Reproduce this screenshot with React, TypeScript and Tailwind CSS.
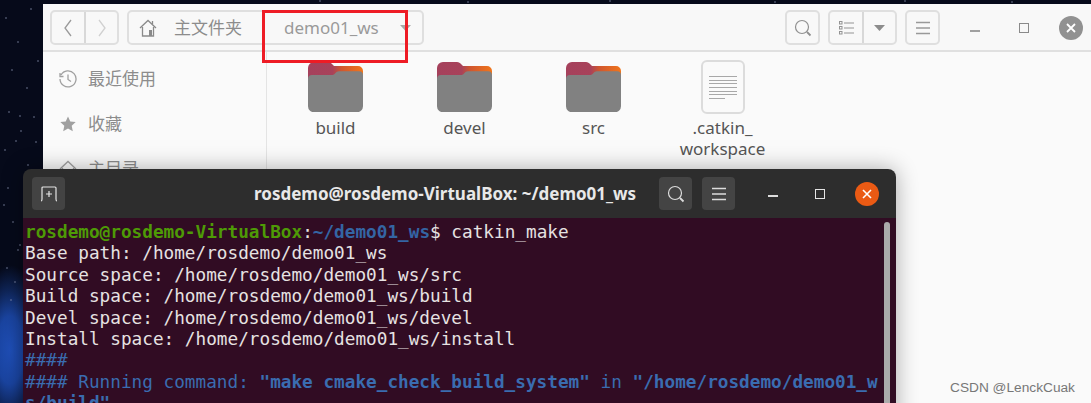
const sans = 'font-["Noto_Sans","Noto_Sans_CJK_SC",sans-serif]'

const stars = [
  [6, 18], [18, 42], [31, 9], [12, 70], [27, 88], [38, 61], [9, 112], [21, 131], [34, 117], [20, 116], [5, 150],
  [16, 141], [28, 165], [8, 188], [36, 142], [13, 222], [4, 205], [18, 250], [7, 268], [15, 282], [11, 300], [20, 245],
  [320, 1], [468, 2], [610, 1], [775, 2], [905, 1], [1012, 2],
]

function Wallpaper() {
  return (
    <svg className="absolute left-0 top-0" width="1091" height="403" viewBox="0 0 1091 403">
      {stars.map(([x, y]) => (
        <circle key={`${x}-${y}`} cx={x} cy={y} r="0.700" fill="#8d97b5" />
      ))}
    </svg>
  )
}

function Folder() {
  return (
    <svg width="55" height="50" viewBox="0 0 55 50">
      <defs>
        <linearGradient id="tab" x1="0" x2="1" y1="0" y2="0">
          <stop offset="0" stopColor="#a5415c" />
          <stop offset="0.45" stopColor="#a8425a" />
          <stop offset="0.6" stopColor="#d0562f" />
          <stop offset="1" stopColor="#f0761c" />
        </linearGradient>
      </defs>
      <path d="M0 6a6 6 0 0 1 6-6h14c2 0 3 1 4 2l2 2h24a5 5 0 0 1 5 5v12H0z" fill="url(#tab)" />
      <path d="M0 17a4 4 0 0 1 4-4h19c2 0 3-.5 4-1.500l1.500-1.500c.8-.6 1.500-.8 2.500-.8h20a4 4 0 0 1 4 4v31a6 6 0 0 1-6 6H6a6 6 0 0 1-6-6z" fill="#818181" />
    </svg>
  )
}

function DocIcon() {
  return (
    <div className="-mb-[2px] flex h-[54px] w-[44px] flex-col gap-[2.700px] rounded-[6px] border-2 border-[#dcdcdc] bg-[#fafafa] px-[6px] pt-[14px]">
      {[0, 1, 2, 3, 4, 5].map((i) => (
        <div key={i} className="h-px w-full bg-[#a8a8a8]" />
      ))}
      <div className="h-px w-[60%] bg-[#a8a8a8]" />
    </div>
  )
}

function FileItem({ name }: { name: string }) {
  return (
    <div className="flex w-[129px] flex-col items-center">
      <div className="flex h-[50px] items-end">
        {name === '.catkin_\nworkspace' ? <DocIcon /> : <Folder />}
      </div>
      <div className="mt-[5px] whitespace-pre-line text-center text-[17px] leading-[21px] text-[#555]">{name}</div>
    </div>
  )
}

function Lens({ color }: { color: string }) {
  return (
    <svg width="18" height="18" viewBox="0 0 18 18" fill="none" stroke={color}>
      <circle cx="8" cy="8" r="6.500" strokeWidth="1.200" />
      <path d="M13 13l3.500 3.500" strokeWidth="1.800" />
    </svg>
  )
}

function Burger({ color }: { color: string }) {
  return (
    <svg width="14" height="14" viewBox="0 0 14 14" stroke={color} strokeWidth="1.300">
      <path d="M0 1.500h14M0 7h14M0 12.500h14" />
    </svg>
  )
}

function FilesWindow() {
  return (
    <div className={`absolute bottom-0 left-[43px] right-0 top-[4px] flex flex-col rounded-tl-[8px] bg-[#fafafa] ${sans}`}>
      <div className="relative flex h-[48px] shrink-0 items-start border-b-2 border-[#e0e0e0] bg-[#f8f8f8] pl-[7px] pt-[6px]">
        <div className="flex h-[35px] w-[69px] rounded-[5px] border-2 border-[#dfdfdf]">
          <div className="flex w-[34px] items-center justify-center border-r-2 border-[#d8d8d8]">
            <svg width="10" height="18" viewBox="0 0 10 18" fill="none" stroke="#9a9a9a" strokeWidth="1.300">
              <path d="M8 1L2 9l6 8" />
            </svg>
          </div>
          <div className="flex flex-1 items-center justify-center">
            <svg width="10" height="18" viewBox="0 0 10 18" fill="none" stroke="#d0d0d0" strokeWidth="1.300">
              <path d="M2 1l6 8-6 8" />
            </svg>
          </div>
        </div>
        <div className="ml-[8px] flex h-[35px] w-[297px] items-center rounded-[5px] border-2 border-[#dfdfdf] pl-[10px]">
          <svg width="18" height="18" viewBox="0 0 18 18" fill="none" stroke="#8a8a8a" strokeWidth="1.300">
            <path d="M1 9l8-7.500L17 9M3.500 8v9h11V8" />
            <rect x="10" y="11" width="3" height="6" fill="#8a8a8a" stroke="none" />
            <path d="M13.500 2v3" />
          </svg>
          <span className="ml-[17px] w-[110px] text-[17px] text-[#8c8c8c]">主文件夹</span>
          <span className="text-[17px] text-[#9a9a9a]">demo01_ws</span>
          <svg className="ml-[21px]" width="11" height="6" viewBox="0 0 11 6">
            <path d="M0 0h11L5.500 6z" fill="#a8a8a8" />
          </svg>
        </div>
        <div className="ml-auto flex h-[35px] items-center">
          <div className="flex h-[35px] w-[35px] items-center justify-center rounded-[5px] border-2 border-[#dfdfdf]">
            <Lens color="#8f8f8f" />
          </div>
          <div className="ml-[8px] flex h-[35px] w-[69px] rounded-[5px] border-2 border-[#dfdfdf]">
            <div className="flex w-[34px] items-center justify-center border-r-2 border-[#d8d8d8]">
              <svg width="15" height="14" viewBox="0 0 15 14" fill="none" stroke="#939393">
                <path d="M5 2h10M5 7h10M5 12h10" strokeWidth="1.200" />
                <rect x=".5" y=".5" width="2.500" height="2.500" />
                <rect x=".5" y="5.500" width="2.500" height="2.500" />
                <rect x=".5" y="10.500" width="2.500" height="2.500" />
              </svg>
            </div>
            <div className="flex flex-1 items-center justify-center">
              <svg width="11" height="6" viewBox="0 0 11 6">
                <path d="M0 0h11L5.500 6z" fill="#8c8c8c" />
              </svg>
            </div>
          </div>
          <div className="ml-[8px] flex h-[35px] w-[35px] items-center justify-center rounded-[5px] border-2 border-[#dfdfdf]">
            <Burger color="#999" />
          </div>
          <div className="ml-[30px] mt-[7px] h-[2px] w-[10px] bg-[#a0a0a0]" />
          <div className="ml-[39px] h-[10px] w-[10px] border-[1.500px] border-[#8a8a8a]" />
          <div className="ml-[30px] mr-[8px] flex h-[24px] w-[24px] items-center justify-center rounded-full bg-[#919191]">
            <svg width="10" height="10" viewBox="0 0 10 10" stroke="#fff" strokeWidth="1.800">
              <path d="M1 1l8 8M9 1l-8 8" />
            </svg>
          </div>
        </div>
      </div>
      <div className="flex flex-1">
        <div className="w-[224px] shrink-0 border-r border-[#e4e4e4] bg-[#fafafa] pl-[16px] pt-[16px]">
          <div className="flex h-[22px] items-center gap-[11px]">
            <svg width="18" height="18" viewBox="0 0 18 18" fill="none" stroke="#a0a0a0" strokeWidth="1.300">
              <path d="M2 5a8 8 0 1 1-1 4M1 3v3.500h3.500M9 4.500V9.500l3 2" />
            </svg>
            <span className="text-[17px] text-[#8c8c8c]">最近使用</span>
          </div>
          <div className="mt-[23px] flex h-[22px] items-center gap-[11px]">
            <svg width="18" height="18" viewBox="0 0 18 18">
              <path d="M9 1.500l2.300 5 5.400.6-4 3.700 1.100 5.400L9 13.500l-4.800 2.700 1.100-5.400-4-3.700 5.400-.6z" fill="#a0a0a0" />
            </svg>
            <span className="text-[17px] text-[#8c8c8c]">收藏</span>
          </div>
          <div className="mt-[23px] flex h-[22px] items-center gap-[11px]">
            <svg width="18" height="18" viewBox="0 0 18 18" fill="none" stroke="#a0a0a0" strokeWidth="1.300">
              <path d="M1 9l8-7.500L17 9M3.500 8v9h11V8" />
            </svg>
            <span className="text-[17px] text-[#8c8c8c]">主目录</span>
          </div>
        </div>
        <div className="flex items-start pl-[4px] pt-[10px]">
          <FileItem name="build" />
          <FileItem name="devel" />
          <FileItem name="src" />
          <FileItem name={'.catkin_\nworkspace'} />
        </div>
      </div>
    </div>
  )
}

function TerminalWindow() {
  const line = 'h-[21.400px] whitespace-pre'
  return (
    <div className="absolute left-[23px] top-[169px] flex h-[250px] w-[873px] flex-col overflow-hidden rounded-t-[8px]">
      <div className="relative flex h-[49px] shrink-0 items-center bg-[#2d2d2d] pl-[9px]">
        <div className="flex h-[33px] w-[33px] items-center justify-center rounded-[4px] bg-[#434343]">
          <svg width="18" height="16" viewBox="0 0 18 16" fill="none" stroke="#e4e4e4" strokeWidth="1.200">
            <path d="M1 15q1 0 1-2V2q0-1 1-1h12q1 0 1 1v11q0 2 1 2M9 5v6M6 8h6" />
          </svg>
        </div>
        <div className="ml-[189px] whitespace-nowrap font-['Noto_Sans',sans-serif] text-[17px] font-bold text-[#e8e8e8]">
          rosdemo@rosdemo-VirtualBox: ~/demo01_ws
        </div>
        <div className="ml-auto flex items-center">
          <div className="flex h-[33px] w-[33px] items-center justify-center rounded-[4px] bg-[#444]">
            <Lens color="#dcdcdc" />
          </div>
          <div className="ml-[10px] flex h-[33px] w-[33px] items-center justify-center rounded-[4px] bg-[#444]">
            <Burger color="#dcdcdc" />
          </div>
          <div className="ml-[33px] mt-[5px] h-[2px] w-[10px] bg-[#dcdcdc]" />
          <div className="ml-[37px] h-[10px] w-[10px] border-[1.500px] border-[#e4e4e4]" />
          <div className="ml-[30px] mr-[17px] flex h-[24px] w-[24px] items-center justify-center rounded-full bg-[#ea5a14]">
            <svg width="10" height="10" viewBox="0 0 10 10" stroke="#fff" strokeWidth="1.600">
              <path d="M1 1l8 8M9 1l-8 8" />
            </svg>
          </div>
        </div>
      </div>
      <div className="relative flex-1 bg-[#310c23] pl-[2px] pt-[4px] font-['DejaVu_Sans_Mono',monospace] text-[17.720px] leading-[21.400px] text-[#e6e2e2]">
        <div className={line}>
          <span className="font-bold text-[#4e9a06]">rosdemo@rosdemo-VirtualBox</span>:
          <span className="font-bold text-[#3465a4]">~/demo01_ws</span>$ catkin_make
        </div>
        <div className={line}>Base path: /home/rosdemo/demo01_ws</div>
        <div className={line}>Source space: /home/rosdemo/demo01_ws/src</div>
        <div className={line}>Build space: /home/rosdemo/demo01_ws/build</div>
        <div className={line}>Devel space: /home/rosdemo/demo01_ws/devel</div>
        <div className={line}>Install space: /home/rosdemo/demo01_ws/install</div>
        <div className={`${line} text-[#3a6cb0]`}>####</div>
        <div className={`${line} text-[#3a6cb0]`}>
          #### Running command: <span className="font-bold">"make cmake_check_build_system"</span> in <span className="font-bold">"/home/rosdemo/demo01_w</span>
        </div>
        <div className={`${line} font-bold text-[#3a6cb0]`}>s/build"</div>
        <div className="absolute bottom-0 right-[6px] top-[4px] w-[6px] rounded-full bg-[#ababab]" />
      </div>
    </div>
  )
}

export default function App() {
  return (
    <div className="relative h-[403px] w-[1091px] overflow-hidden bg-[radial-gradient(ellipse_34px_85px_at_10px_350px,#1f4fb8_0%,#1a44a0_40%,#0f2558_70%,#060a1a_100%)]">
      <Wallpaper />
      <FilesWindow />
      {/* shadow sits on its own box so the terminal can stay clipped at the page bottom */}
      <div className="absolute left-[23px] top-[169px] h-[260px] w-[873px] rounded-t-[8px] shadow-[0_0_22px_rgba(0,0,0,0.32)]" />
      <TerminalWindow />
      <div className="absolute bottom-[6px] left-[950px] font-['Liberation_Sans',sans-serif] text-[13.700px] leading-[18px] text-[#777]">
        CSDN @LenckCuak
      </div>
      <div className="absolute left-[262px] top-[10px] h-[53px] w-[146px] border-[3px] border-[#ee1c25]" />
    </div>
  )
}
